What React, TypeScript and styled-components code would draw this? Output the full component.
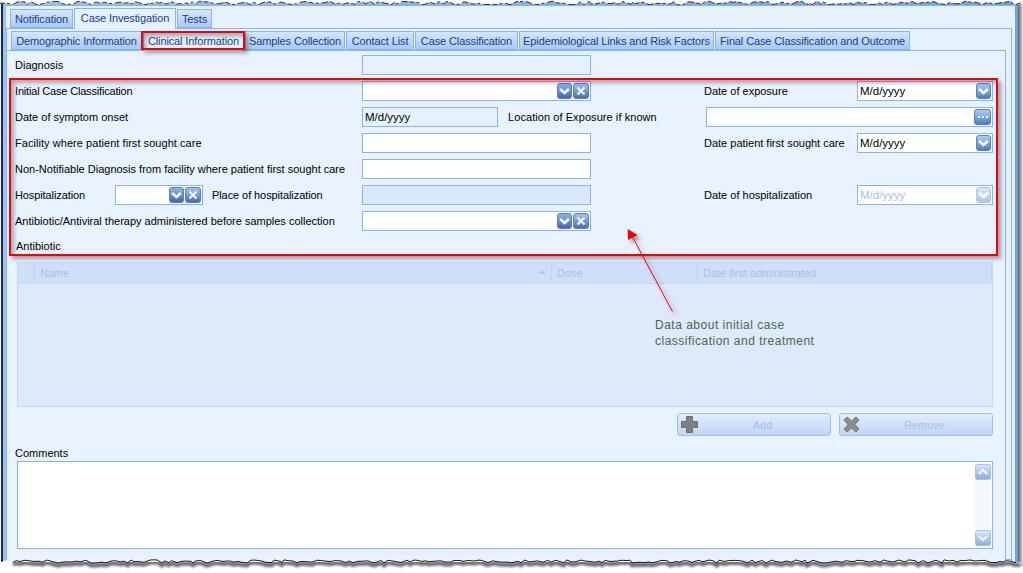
import React from "react";
import styled, { createGlobalStyle } from "styled-components";

const Global = createGlobalStyle`
  html, body { margin: 0; padding: 0; background: #fff; width: 1023px; height: 573px; overflow: hidden; }
  body { font-family: "Liberation Sans", Arial, sans-serif; font-size: 11px; color: #000; }
`;

const dots = `repeating-conic-gradient(#e5f0fe 0 25%, #ecf5ff 0 50%) 0 0 / 2px 2px`;

const Page = styled.div`
  position: relative;
  width: 1023px;
  height: 573px;
  overflow: hidden;
  background: #fff;
`;

const Window = styled.div`
  position: relative;
  box-sizing: border-box;
  width: 1017px;
  height: 563px;
  margin-left: 1px;
  border-left: 2px solid #13265e;
  background: linear-gradient(90deg, #9dc0f2, #6d9fe8);
  padding: 5px 3px 0 3px;
  box-shadow: 3px 3px 4px rgba(40, 40, 40, 0.75);
`;

const Body = styled.div`
  box-sizing: border-box;
  height: 558px;
  background: #e6f1fe;
  border-top: 1px solid #8ab4ec;
  padding-top: 2px;
`;

const OuterTabs = styled.div`
  display: flex;
  align-items: flex-end;
  gap: 1px;
  height: 20px;
  padding-left: 4px;
`;

const Tab = styled.div<{ $w: number; $active?: boolean; $h: number }>`
  box-sizing: border-box;
  width: ${(p) => p.$w}px;
  height: ${(p) => p.$h}px;
  display: flex;
  align-items: center;
  justify-content: center;
  color: #17408f;
  white-space: nowrap;
  letter-spacing: -0.12px;
  border: 1px solid #8ab4ec;
  border-bottom: ${(p) => (p.$active ? "0" : "1px solid #8ab4ec")};
  background: ${(p) => (p.$active ? "#e6f1fe" : "linear-gradient(#d6e6fb, #a9c9f3)")};
  position: relative;
  z-index: ${(p) => (p.$active ? 2 : 0)};
  margin-bottom: ${(p) => (p.$active ? "-1px" : "0")};
  padding-bottom: ${(p) => (p.$active ? "2px" : "0")};
`;

const OuterPanel = styled.div`
  box-sizing: border-box;
  width: 1006px;
  height: 532px;
  border: 1px solid #8ab4ec;
  background: #e6f1fe;
  padding-top: 2px;
`;

const SubTabs = styled.div`
  display: flex;
  align-items: flex-end;
  gap: 1px;
  height: 19px;
  padding-left: 4px;
`;

const InnerPanel = styled.div`
  box-sizing: border-box;
  width: 999px;
  height: 510px;
  border-top: 1px solid #8ab4ec;
  border-right: 1px solid #8ab4ec;
  background: ${dots};
  padding: 4px 12px 0 8px;
`;

const Row = styled.div`
  display: flex;
  align-items: center;
  height: 20px;
  margin-bottom: 6px;
`;

const Label = styled.div<{ $w?: number; $ml?: number; $ls?: number }>`
  flex: none;
  width: ${(p) => (p.$w ? `${p.$w}px` : "auto")};
  margin-left: ${(p) => p.$ml ?? 0}px;
  letter-spacing: ${(p) => p.$ls ?? 0}px;
  white-space: nowrap;
`;

const Field = styled.div<{ $w: number; $bg?: string; $ml?: number; $muted?: boolean }>`
  flex: none;
  box-sizing: border-box;
  width: ${(p) => p.$w}px;
  height: 20px;
  margin-left: ${(p) => p.$ml ?? 0}px;
  border: 1px solid #8ab4ec;
  background: ${(p) => p.$bg ?? "#fff"};
  display: flex;
  align-items: center;
  justify-content: flex-end;
  gap: 1px;
  padding: 0 1px;
  color: ${(p) => (p.$muted ? "#a8bee9" : "#000")};
`;

const FieldText = styled.span`
  flex: 1;
  padding-left: 1px;
  white-space: nowrap;
  font-size: 11.5px;
`;

const IconBtn = styled.svg<{ $faded?: boolean }>`
  flex: none;
  display: block;
  opacity: ${(p) => (p.$faded ? 0.45 : 1)};
`;

const AntibioticLabel = styled.div`
  height: 14px;
  line-height: 14px;
  margin: 8px 0 9px 1px;
`;

const Table = styled.div`
  box-sizing: border-box;
  width: 976px;
  height: 145px;
  margin-left: 2px;
  border: 1px solid #c6d8f6;
  background: #dee9fc;
`;

const TableHead = styled.div`
  display: grid;
  grid-template-columns: 17px 517px 146px 1fr;
  height: 20px;
  background: #cfdffa;
  border-bottom: 1px solid #c6d8f6;
  color: #a9bde9;
`;

const HeadCell = styled.div`
  position: relative;
  display: flex;
  align-items: center;
  padding-left: 5px;
  border-right: 1px solid #bfd2f4;
`;

const SortMark = styled.span`
  position: absolute;
  right: 5px;
  top: 7px;
  width: 0;
  height: 0;
  border-left: 4px solid transparent;
  border-right: 4px solid transparent;
  border-bottom: 4px solid #b4c8ec;
`;

const Actions = styled.div`
  display: flex;
  justify-content: flex-end;
  gap: 8px;
  width: 978px;
  margin-top: 6px;
`;

const ActionBtn = styled.div`
  box-sizing: border-box;
  width: 154px;
  height: 23px;
  display: flex;
  align-items: center;
  padding-left: 3px;
  border: 1px solid #a6bde6;
  border-radius: 3px;
  background: linear-gradient(#e2edfc, #bfd4f5);
  color: #a6bfec;
`;

const ActionText = styled.span`
  flex: 1;
  text-align: center;
  padding-right: 3px;
`;

const CommentsLabel = styled.div`
  height: 14px;
  line-height: 14px;
  margin: 10px 0 1px 0;
`;

const TextBox = styled.div`
  box-sizing: border-box;
  width: 976px;
  height: 88px;
  margin-left: 2px;
  border: 1px solid #8ab4ec;
  background: #fff;
  display: flex;
  justify-content: flex-end;
  padding: 1px 1px;
`;

const ScrollTrack = styled.div`
  width: 16px;
  background: #f3f7fe;
  display: flex;
  flex-direction: column;
  justify-content: space-between;
  padding: 1px 0;
`;

const RedBox = styled.div<{ $x: number; $y: number; $w: number; $h: number }>`
  position: absolute;
  box-sizing: border-box;
  left: ${(p) => p.$x}px;
  top: ${(p) => p.$y}px;
  width: ${(p) => p.$w}px;
  height: ${(p) => p.$h}px;
  border: 2px solid #f60000;
  box-shadow: 3px 3px 4px rgba(50, 60, 80, 0.45), inset 3px 3px 4px rgba(50, 60, 80, 0.4);
  pointer-events: none;
  z-index: 5;
`;

const Note = styled.div`
  position: absolute;
  left: 655px;
  top: 317px;
  font-size: 12px;
  line-height: 16px;
  color: #48694c;
  letter-spacing: 0.5px;
  z-index: 6;
`;

const Overlay = styled.svg`
  position: absolute;
  left: 0;
  top: 0;
  z-index: 7;
  pointer-events: none;
`;

function jag(seed: number, base: number, amp: number): [number, number][] {
  let s = seed;
  const next = () => {
    s = (s * 1103515245 + 12345) & 0x7fffffff;
    return s / 0x7fffffff;
  };
  const pts: [number, number][] = [];
  let x = 0;
  while (x < 1020) {
    pts.push([x, +(base + (next() - 0.5) * amp).toFixed(1)]);
    x += 2 + Math.floor(next() * 5);
  }
  pts.push([1020, base]);
  return pts;
}
const toStr = (p: [number, number][], dy = 0) => p.map(([x, y]) => `${x},${y + dy}`).join(" ");

const Chevron = ({ light, faded }: { light?: boolean; faded?: boolean }) => {
  const id = light ? "gl" : "gd";
  return (
    <IconBtn $faded={faded} width="15" height="16" viewBox="0 0 15 16">
      <defs>
        <linearGradient id={id} x1="0" y1="0" x2="0" y2="1">
          <stop offset="0" stopColor={light ? "#b0cef6" : "#8fb4ea"} />
          <stop offset="0.5" stopColor={light ? "#7ea8e6" : "#6791d9"} />
          <stop offset="1" stopColor={light ? "#4f76c2" : "#3f63ae"} />
        </linearGradient>
      </defs>
      <rect x="0.5" y="0.5" width="14" height="15" rx="2.5" fill={`url(#${id})`} stroke="#5a7fc2" />
      <path d="M3.2 6 L7.5 10 L11.8 6" fill="none" stroke="#fff" strokeWidth="2.4" />
    </IconBtn>
  );
};

const Cross = () => (
  <IconBtn width="16" height="16" viewBox="0 0 16 16">
    <defs>
      <linearGradient id="gx" x1="0" y1="0" x2="0" y2="1">
        <stop offset="0" stopColor="#a6c4ef" />
        <stop offset="0.5" stopColor="#769cdc" />
        <stop offset="1" stopColor="#466aa8" />
      </linearGradient>
    </defs>
    <rect x="0.5" y="0.5" width="15" height="15" rx="2.5" fill="url(#gx)" stroke="#5a7fc2" />
    <path d="M4.5 4.5 L11.5 11.5 M11.5 4.5 L4.5 11.5" stroke="#fff" strokeWidth="1.9" />
  </IconBtn>
);

const Dots = () => (
  <IconBtn width="17" height="16" viewBox="0 0 17 16">
    <defs>
      <linearGradient id="gm" x1="0" y1="0" x2="0" y2="1">
        <stop offset="0" stopColor="#b0cef6" />
        <stop offset="0.5" stopColor="#7ea8e6" />
        <stop offset="1" stopColor="#4f76c2" />
      </linearGradient>
    </defs>
    <rect x="0.5" y="0.5" width="16" height="15" rx="2.5" fill="url(#gm)" stroke="#5a7fc2" />
    <path d="M4 7h2v2H4zM8 7h2v2H8zM12 7h2v2h-2z" fill="#fff" />
  </IconBtn>
);

const ScrollBtn = ({ up }: { up?: boolean }) => (
  <IconBtn width="16" height="16" viewBox="0 0 16 16">
    <defs>
      <linearGradient id={up ? "su" : "sd"} x1="0" y1="0" x2="0" y2="1">
        <stop offset="0" stopColor="#dbe7fa" />
        <stop offset="1" stopColor="#8faadf" />
      </linearGradient>
    </defs>
    <rect x="0.5" y="0.5" width="15" height="15" rx="2" fill={`url(#${up ? "su" : "sd"})`} stroke="#a9c0ea" />
    <path d={up ? "M3.8 10 L8 6 L12.2 10" : "M3.8 6 L8 10 L12.2 6"} fill="none" stroke="#f2f6fe" strokeWidth="2" />
  </IconBtn>
);

const Combo = ({ w }: { w: number }) => (
  <Field $w={w}>
    <Chevron />
    <Cross />
  </Field>
);

const DateBox = ({ disabled }: { disabled?: boolean }) => (
  <Field $w={136} $muted={disabled}>
    <FieldText>M/d/yyyy</FieldText>
    <Chevron light faded={disabled} />
  </Field>
);

const outer = [
  { t: "Notification", w: 63 },
  { t: "Case Investigation", w: 102, active: true },
  { t: "Tests", w: 35 },
];
const sub = [
  { t: "Demographic Information", w: 131 },
  { t: "Clinical Information", w: 101, active: true },
  { t: "Samples Collection", w: 100 },
  { t: "Contact List", w: 68 },
  { t: "Case Classification", w: 103 },
  { t: "Epidemiological Links and Risk Factors", w: 195 },
  { t: "Final Case Classification and Outcome", w: 195 },
];

const top = jag(7, 3, 3.6);
const bottom = jag(23, 561.5, 3.2);

export default function App() {
  return (
    <Page>
      <Global />
      <Window>
        <Body>
          <OuterTabs>
            {outer.map((o) => (
              <Tab key={o.t} $w={o.w} $h={o.active ? 21 : 19} $active={o.active}>
                {o.t}
              </Tab>
            ))}
          </OuterTabs>
          <OuterPanel>
            <SubTabs>
              {sub.map((o) => (
                <Tab key={o.t} $w={o.w} $h={o.active ? 20 : 19} $active={o.active}>
                  {o.t}
                </Tab>
              ))}
            </SubTabs>
            <InnerPanel>
              <Row>
                <Label $w={347}>Diagnosis</Label>
                <Field $w={229} $bg="#e6f1fe" />
              </Row>
              <Row>
                <Label $w={347} $ls={-0.18}>Initial Case Classification</Label>
                <Combo w={229} />
                <Label $w={153} $ml={113}>Date of exposure</Label>
                <DateBox />
              </Row>
              <Row>
                <Label $w={347}>Date of symptom onset</Label>
                <Field $w={136} $bg="#e6f1fe">
                  <FieldText>M/d/yyyy</FieldText>
                </Field>
                <Label $w={198} $ml={10} $ls={0.07}>Location of Exposure if known</Label>
                <Field $w={287}>
                  <Dots />
                </Field>
              </Row>
              <Row>
                <Label $w={347} $ls={0.05}>Facility where patient first sought care</Label>
                <Field $w={229} />
                <Label $w={153} $ml={113}>Date patient first sought care</Label>
                <DateBox />
              </Row>
              <Row>
                <Label $w={347}>Non-Notifiable Diagnosis from facility where patient first sought care</Label>
                <Field $w={229} />
              </Row>
              <Row>
                <Label $w={100} $ls={-0.1}>Hospitalization</Label>
                <Combo w={88} />
                <Label $w={150} $ml={9} $ls={-0.08}>Place of hospitalization</Label>
                <Field $w={229} $bg="#dbe7fb" />
                <Label $w={153} $ml={113}>Date of hospitalization</Label>
                <DateBox disabled />
              </Row>
              <Row>
                <Label $w={347}>Antibiotic/Antiviral therapy administered before samples collection</Label>
                <Combo w={229} />
              </Row>
              <AntibioticLabel>Antibiotic</AntibioticLabel>
              <Table>
                <TableHead>
                  <HeadCell />
                  <HeadCell>
                    Name
                    <SortMark />
                  </HeadCell>
                  <HeadCell>Dose</HeadCell>
                  <HeadCell>Date first administrated</HeadCell>
                </TableHead>
              </Table>
              <Actions>
                <ActionBtn>
                  <svg width="17" height="17" viewBox="0 0 17 17">
                    <path d="M5.5 .5h6v5h5v6h-5v5h-6v-5h-5v-6h5z" fill="#808080" stroke="#6e6e6e" />
                  </svg>
                  <ActionText>Add</ActionText>
                </ActionBtn>
                <ActionBtn>
                  <svg width="17" height="17" viewBox="0 0 17 17">
                    <path d="M1 4 L4 1 L8.5 5 L13 1 L16 4 L12 8.5 L16 13 L13 16 L8.5 12 L4 16 L1 13 L5 8.5 Z" fill="#8c8c8c" stroke="#767676" />
                  </svg>
                  <ActionText>Remove</ActionText>
                </ActionBtn>
              </Actions>
              <CommentsLabel>Comments</CommentsLabel>
              <TextBox>
                <ScrollTrack>
                  <ScrollBtn up />
                  <ScrollBtn />
                </ScrollTrack>
              </TextBox>
            </InnerPanel>
          </OuterPanel>
        </Body>
      </Window>

      <RedBox $x={141} $y={31} $w={104} $h={19} />
      <RedBox $x={9} $y={78} $w={989} $h={178} />
      <Note>
        Data about initial case
        <br />
        classification and treatment
      </Note>

      <Overlay width="1023" height="573" viewBox="0 0 1023 573">
        <defs>
          <filter id="soft" x="-5%" y="-5%" width="110%" height="400%">
            <feGaussianBlur stdDeviation="1.1" />
          </filter>
          <filter id="arrowShadow" x="-40%" y="-40%" width="180%" height="180%">
            <feDropShadow dx="3" dy="3" stdDeviation="2" floodColor="#334" floodOpacity="0.5" />
          </filter>
        </defs>
        <g filter="url(#arrowShadow)">
          <line x1="672.5" y1="311.5" x2="632" y2="236" stroke="#f00000" strokeWidth="1" />
          <polygon points="627.7,229 628,240 637.5,235" fill="#f00000" />
        </g>
        {/* torn top edge */}
        <polygon points={`0,0 1020,0 ${toStr(top).split(" ").reverse().join(" ")}`} fill="#fff" />
        <polyline points={toStr(top)} fill="none" stroke="#20232c" strokeWidth="0.9" strokeDasharray="5 2 3 3 7 2" />
        {/* torn bottom edge */}
        <polygon points={`${toStr(bottom)} 1023,573 0,573`} fill="#fff" />
        <polyline points={toStr(bottom.filter(([x]) => x > 9 && x < 1022), 2.5)} fill="none" stroke="#6a6a6a" strokeWidth="4" filter="url(#soft)" />
        <polyline points={toStr(bottom.filter(([x]) => x > 12 && x < 1018))} fill="none" stroke="#15171c" strokeWidth="1" />
      </Overlay>
    </Page>
  );
}
